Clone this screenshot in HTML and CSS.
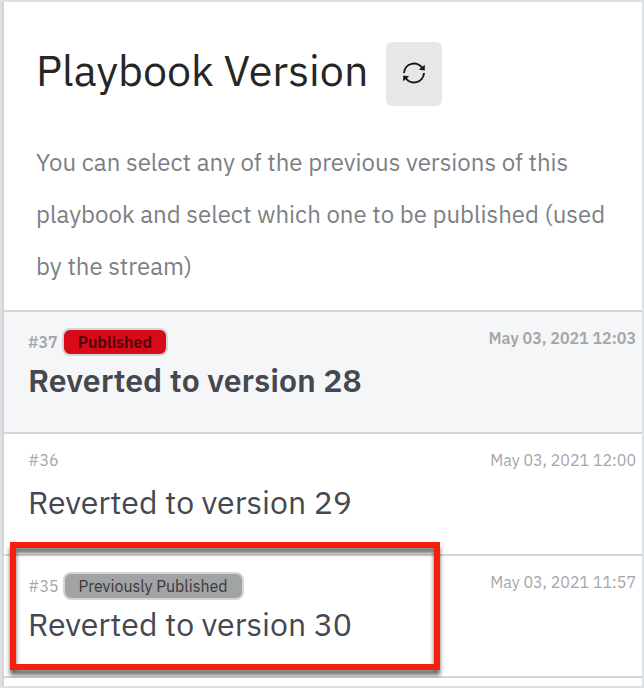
FILE: index.html
```html
<!DOCTYPE html>
<html lang="en">
<head>
  <meta charset="UTF-8">
  <meta name="viewport" content="width=device-width, initial-scale=1.0">
  <title>Playbook Version</title>
  <link rel="stylesheet" href="styles.css">
</head>
<body>
  <main class="panel">
    <header class="panel-header">
      <div class="title-row">
        <h1>Playbook Version</h1>
        <button type="button" class="refresh" aria-label="Refresh">
          <svg viewBox="0 0 24 24" width="24" height="24" aria-hidden="true">
            <path d="M2 11A10 10 0 0 1 20.600 6.500M22 11A10 10 0 0 1 3.400 15.500" fill="none" stroke="#161616" stroke-width="2"/>
            <path d="M22.800 2.800v5.800l-6-.8zM1.200 19.200v-5.800l6 .8z" fill="#161616"/>
          </svg>
        </button>
      </div>
      <p>You can select any of the previous versions of this playbook and select which one to be published (used by the stream)</p>
    </header>

    <ul class="versions">
      <li class="version current">
        <div class="info">
          <div class="meta">
            <span>#37</span>
            <span class="badge published">Published</span>
          </div>
          <h2>Reverted to version 28</h2>
        </div>
        <time datetime="2021-05-03T12:03">May 03, 2021 12:03</time>
      </li>
      <li class="version">
        <div class="info">
          <div class="meta">
            <span>#36</span>
          </div>
          <h2>Reverted to version 29</h2>
        </div>
        <time datetime="2021-05-03T12:00">May 03, 2021 12:00</time>
      </li>
      <li class="version">
        <div class="info">
          <div class="meta">
            <span>#35</span>
            <span class="badge">Previously Published</span>
          </div>
          <h2>Reverted to version 30</h2>
        </div>
        <time datetime="2021-05-03T11:57">May 03, 2021 11:57</time>
        <div class="highlight"></div>
      </li>
    </ul>
  </main>
</body>
</html>
```

FILE: styles.css
```css
* {
  box-sizing: border-box;
}

body {
  margin: 0;
  padding: 2px 0 2px 2px;
  font-family: "IBM Plex Sans", Roboto, sans-serif;
  background-color: #dde1e6;
  color: #46484f;
}

.panel {
  padding-bottom: 8px;
  background-color: #fff;
  border-left: 2px solid #d3d5d7;
  border-right: 2px solid #dde1e6;
}

.panel-header {
  padding: 40px 32px 18px;
}

.title-row {
  display: flex;
  align-items: center;
  gap: 18px;
}

h1 {
  margin: 0;
  padding-bottom: 8px;
  font-size: 43px;
  line-height: 56px;
  font-weight: 400;
  color: #262626;
}

.refresh {
  display: flex;
  align-items: center;
  justify-content: center;
  width: 56px;
  height: 64px;
  padding: 0;
  background-color: #e6e7e9;
  border: none;
  border-radius: 6px;
  cursor: pointer;
}

.panel-header p {
  margin: 30px 0 0;
  font-size: 24px;
  line-height: 52px;
  color: #7d7f84;
}

.versions {
  margin: 0;
  padding: 0;
  list-style: none;
  border-bottom: 2px solid #d3d5d7;
}

.version {
  position: relative;
  display: flex;
  justify-content: space-between;
  gap: 16px;
  min-height: 122px;
  padding: 16px 6px 16px 24px;
  border-top: 2px solid #d3d5d7;
}

.meta {
  display: flex;
  gap: 4px;
  height: 28px;
  font-size: 16px;
  line-height: 20px;
  color: #a5a6a8;
}

.meta:has(.badge) {
  align-items: center;
}

.badge {
  padding: 0 14px;
  line-height: 24px;
  color: #393939;
  background-color: #a2a3a5;
  border: 2px solid #d3d5d7;
  border-radius: 8px;
}

.version h2 {
  margin: 4px 0 0;
  font-size: 32px;
  line-height: 40px;
  font-weight: 400;
}

time {
  font-size: 16px;
  line-height: 20px;
  color: #a5a6a8;
  white-space: nowrap;
}

.current {
  background-color: #f5f6f8;
}

.current,
.current h2 {
  font-weight: 600;
}

.published {
  color: #4e060c;
  background-color: #d80a18;
}

.highlight {
  position: absolute;
  top: -14px;
  left: 6px;
  width: 430px;
  height: 128px;
  border: 6px solid #f71e0b;
  filter: drop-shadow(0 5px 2px rgba(0, 0, 0, 0.6));
  pointer-events: none;
}
```
